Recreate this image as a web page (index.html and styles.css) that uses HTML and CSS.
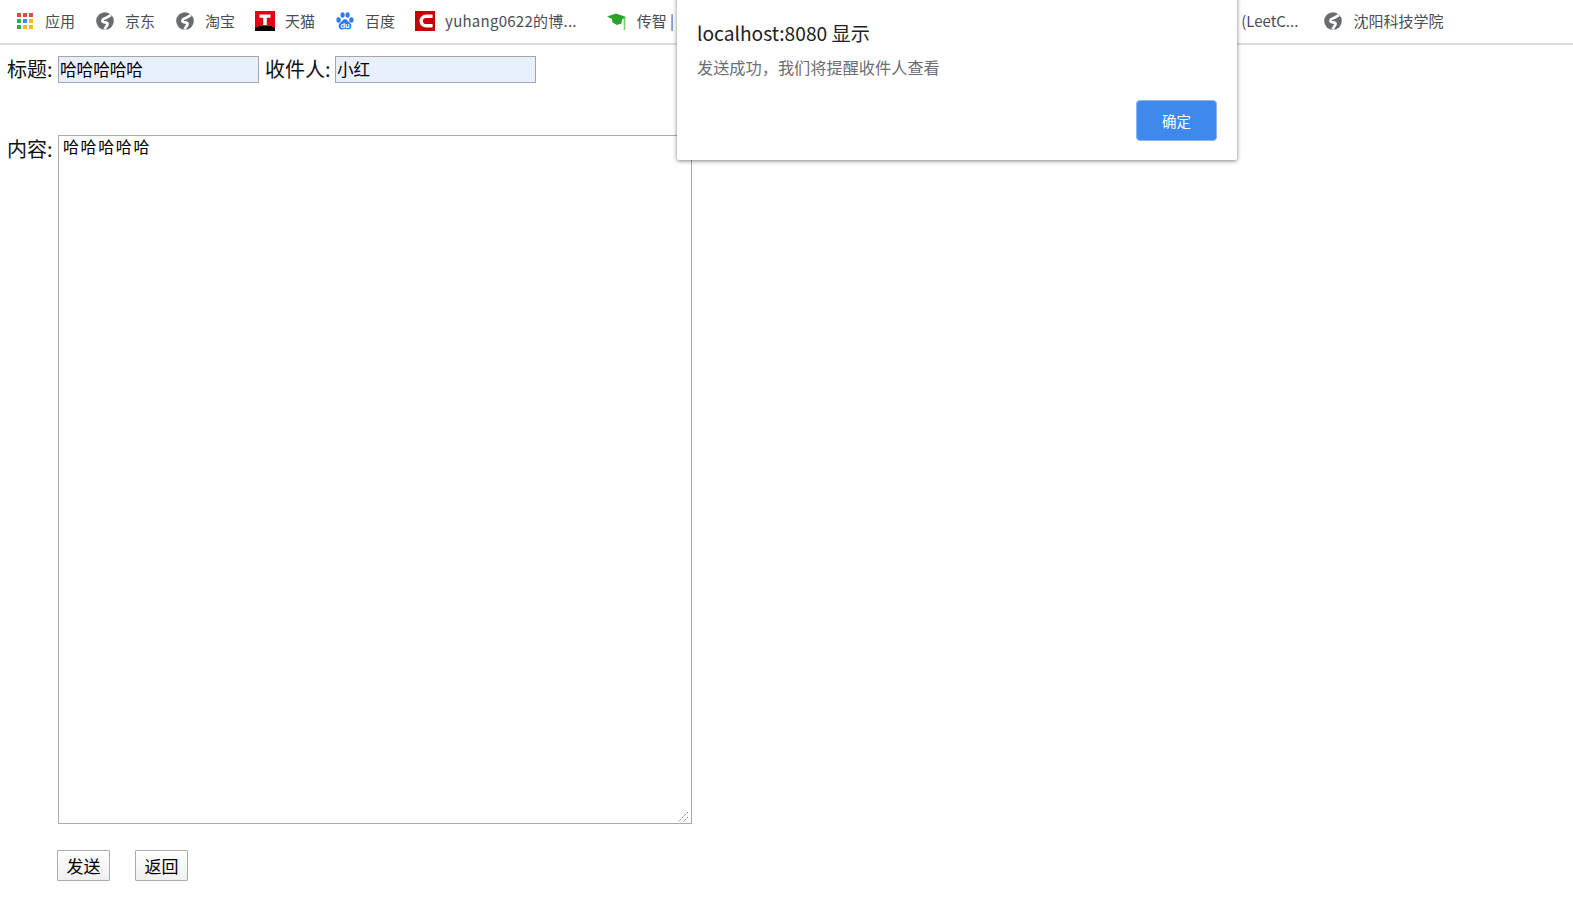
FILE: index.html
```html
<!DOCTYPE html>
<html lang="zh-CN">
<head>
<meta charset="utf-8">
<title>发送</title>
<link rel="stylesheet" href="styles.css">
</head>
<body>
<svg class="defs" width="0" height="0" aria-hidden="true">
  <defs>
    <symbol id="globe" viewBox="0 0 18 18">
      <circle cx="9" cy="9" r="8.8" fill="#686b70"/>
      <path d="M15 2.8 C12.4 4.4 11 6 8.6 6.6 C6 7.2 5.6 9.6 8 10.2 C10 10.6 11.6 10.4 11.6 12 C11.6 13.6 9.6 14.4 8.6 17.4" fill="none" stroke="#fff" stroke-width="2.6"/>
    </symbol>
  </defs>
</svg>

<nav class="bookmarks">
  <a class="bookmark apps">
    <svg class="icon" viewBox="0 0 16 16">
      <rect x="0" y="0" width="4" height="4" fill="#e8453c"/><rect x="6" y="0" width="4" height="4" fill="#e8453c"/><rect x="12" y="0" width="4" height="4" fill="#e8453c"/>
      <rect x="0" y="6" width="4" height="4" fill="#34a853"/><rect x="6" y="6" width="4" height="4" fill="#4285f4"/><rect x="12" y="6" width="4" height="4" fill="#fbbc05"/>
      <rect x="0" y="12" width="4" height="4" fill="#34a853"/><rect x="6" y="12" width="4" height="4" fill="#fbbc05"/><rect x="12" y="12" width="4" height="4" fill="#fbbc05"/>
    </svg>
    <span>应用</span>
  </a>
  <a class="bookmark"><svg class="icon globe"><use href="#globe"/></svg><span>京东</span></a>
  <a class="bookmark"><svg class="icon globe"><use href="#globe"/></svg><span>淘宝</span></a>
  <a class="bookmark">
    <svg class="icon big" viewBox="0 0 20 20">
      <rect width="20" height="20" fill="#e60012"/>
      <path d="M0 17 Q3 16 4 15 L16 15 Q17 16 20 17 L20 20 L0 20 Z" fill="#000"/>
      <path d="M4.5 3.5 H15.5 V6.8 H11.8 V14 H8.2 V6.8 H4.5 Z" fill="#fff"/>
    </svg>
    <span>天猫</span>
  </a>
  <a class="bookmark">
    <svg class="icon globe" viewBox="0 0 18 18">
      <ellipse cx="2.6" cy="8" rx="2.2" ry="2.7" fill="#2f7cf0"/>
      <ellipse cx="6.6" cy="3" rx="2.1" ry="2.8" fill="#2f7cf0"/>
      <ellipse cx="11.6" cy="3" rx="2.1" ry="2.8" fill="#2f7cf0"/>
      <ellipse cx="15.4" cy="8" rx="2.2" ry="2.7" fill="#2f7cf0"/>
      <path d="M9 7 C11 7 11.8 9.4 14.2 11.2 C16.4 13.2 15.4 17.6 12 17.4 C10.6 17.3 10 17 9 17 C8 17 7.4 17.3 6 17.4 C2.6 17.6 1.6 13.2 3.8 11.2 C6.2 9.4 7 7 9 7 Z" fill="#2f7cf0"/>
      <text class="du" x="9" y="15.8">du</text>
    </svg>
    <span>百度</span>
  </a>
  <a class="bookmark">
    <svg class="icon big" viewBox="0 0 20 20">
      <rect width="20" height="20" fill="#c90000"/>
      <path d="M17.6 5.2 H11.4 C8 5.2 6.2 7.4 6.2 10 C6.2 12.6 8 14.8 11.4 14.8 H17.6" fill="none" stroke="#fff" stroke-width="3.4"/>
    </svg>
    <span class="long">yuhang0622的博...</span>
  </a>
  <a class="bookmark cap">
    <svg class="icon big" viewBox="0 0 20 20">
      <path d="M0 5.5 L9 2.5 L19 6 L15 8.5 L14.5 12.5 L10 14 L5.5 11.5 L5 8 Z" fill="#2aa52a"/>
      <path d="M17.5 7 V19" stroke="#6ed06e" stroke-width="1.6"/>
    </svg>
    <span>传智 |</span>
  </a>
  <a class="bookmark leet"><span>(LeetC...</span></a>
  <a class="bookmark"><svg class="icon globe"><use href="#globe"/></svg><span>沈阳科技学院</span></a>
</nav>

<form class="mail">
  <div class="row head">
    <label class="field">标题:</label>
    <input class="text" type="text" value="哈哈哈哈哈">
    <label class="field to">收件人:</label>
    <input class="text" type="text" value="小红">
  </div>
  <div class="row body-row">
    <label class="field">内容:</label>
    <div class="content-wrap">
      <textarea class="content">哈哈哈哈哈</textarea>
      <svg class="grip" viewBox="0 0 11 11" aria-hidden="true">
        <path d="M0.5 10.5 L10.5 0.5 M5.5 10.5 L10.5 5.5" stroke="#6f6f6f" stroke-width="1" stroke-dasharray="1.4 1"/>
      </svg>
    </div>
  </div>
  <div class="actions">
    <button class="btn" type="button">发送</button>
    <button class="btn" type="button">返回</button>
  </div>
</form>

<div class="dialog" role="alertdialog">
  <h1 class="dialog-title">localhost:8080 显示</h1>
  <p class="dialog-msg">发送成功，我们将提醒收件人查看</p>
  <div class="dialog-actions"><button class="ok" type="button">确定</button></div>
</div>
</body>
</html>
```
FILE: styles.css
```css
html, body {
  margin: 0;
  padding: 0;
  height: 899px;
  overflow: hidden;
  background: #fff;
  font-family: "Noto Sans CJK SC", "Noto Sans", sans-serif;
}

.defs { position: absolute; }

.bookmarks {
  display: flex;
  align-items: center;
  height: 41px;
  padding-bottom: 2px;
  padding-left: 17px;
  border-bottom: 2px solid #dcdce1;
  font-size: 15px;
  color: #4b4e52;
}

.bookmark {
  display: flex;
  align-items: center;
  gap: 11px;
  margin-right: 21px;
  white-space: nowrap;
}
.apps { gap: 12px; }

.icon { width: 16px; height: 16px; flex: none; }
.globe { width: 18px; height: 18px; }
.big { width: 20px; height: 20px; margin-left: -1px; margin-right: -1px; }
.du { font: 700 7.5px "Liberation Sans", sans-serif; fill: #fff; text-anchor: middle; }
.long { letter-spacing: .25px; }
.cap { margin-left: 10px; }
.leet { margin-left: 546px; margin-right: 26px; }

.mail {
  display: block;
  padding: 10px 0 0 7px;
}

.row { display: flex; }
.head { align-items: center; height: 27px; margin-bottom: 52px; margin-top: 1px; }

.field {
  font-size: 20px;
  line-height: 27px;
  color: #111;
  width: 51px;
  margin-top: -2px;
  white-space: nowrap;
}
.field.to { width: 70px; margin-left: 6px; }

.text {
  width: 201px;
  height: 27px;
  box-sizing: border-box;
  border: 1px solid #a5a5aa;
  padding: 0 1px 2px;
  background: #e8f0fe;
  font: 16.6px "Noto Sans CJK SC", sans-serif;
  color: #000;
  outline: none;
}

.body-row { align-items: flex-start; }
.body-row .field { margin-top: 0; }

.content-wrap {
  position: relative;
  width: 634px;
  height: 689px;
}

.content {
  display: block;
  width: 100%;
  height: 100%;
  box-sizing: border-box;
  border: 1px solid #a9a9a9;
  padding: 0 4px;
  margin: 0;
  font: 16px/20px "Noto Sans CJK SC", sans-serif;
  letter-spacing: 1.6px;
  color: #000;
  background: #fff;
  outline: none;
  resize: none;
}

.grip {
  position: absolute;
  right: 3px;
  bottom: 2px;
  width: 11px;
  height: 11px;
}

.actions {
  display: flex;
  gap: 25px;
  margin: 26px 0 0 50px;
}

.btn {
  width: 53px;
  height: 31px;
  box-sizing: border-box;
  padding: 0;
  border: 1px solid #ababab;
  border-radius: 1px;
  background: linear-gradient(#fff, #f0f0f0);
  font: 17px/27px "Noto Sans CJK SC", sans-serif;
  color: #000;
}

.dialog {
  position: absolute;
  left: 677px;
  top: -10px;
  width: 560px;
  height: 170px;
  box-sizing: border-box;
  padding: 29px 20px 0;
  background: #fff;
  box-shadow: 0 1px 4px rgba(0, 0, 0, .5);
  border-radius: 0 0 2px 2px;
}

.dialog-title {
  margin: 0;
  font: 400 19.2px/28px "Noto Sans CJK SC", sans-serif;
  color: #202124;
}

.dialog-msg {
  margin: 9px 0 0;
  font-size: 16.2px;
  line-height: 22px;
  color: #6b6e72;
}

.dialog-actions {
  display: flex;
  justify-content: flex-end;
  margin-top: 22px;
}

.ok {
  width: 81px;
  height: 41px;
  box-sizing: border-box;
  border: 1px solid #8ab4f0;
  border-radius: 4px;
  background: #3f88ec;
  color: #fff;
  font: 14.5px "Noto Sans CJK SC", sans-serif;
  padding: 0;
}
```
